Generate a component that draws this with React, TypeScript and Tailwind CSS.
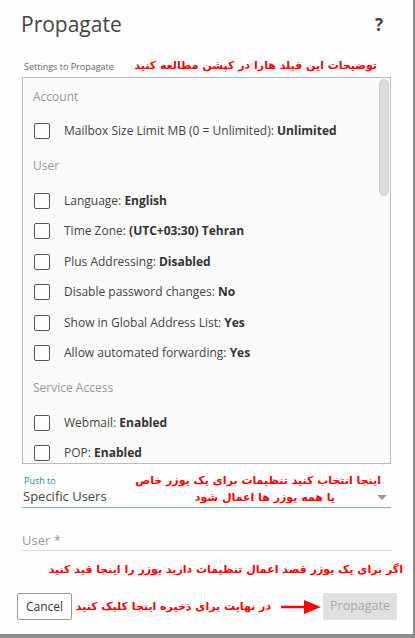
import React from "react";

type Row = { label: string; value: string };
type Section = { title: string; rows: Row[] };

const sections: Section[] = [
  {
    title: "Account",
    rows: [{ label: "Mailbox Size Limit MB (0 = Unlimited):", value: "Unlimited" }],
  },
  {
    title: "User",
    rows: [
      { label: "Language:", value: "English" },
      { label: "Time Zone:", value: "(UTC+03:30) Tehran" },
      { label: "Plus Addressing:", value: "Disabled" },
      { label: "Disable password changes:", value: "No" },
      { label: "Show in Global Address List:", value: "Yes" },
      { label: "Allow automated forwarding:", value: "Yes" },
    ],
  },
  {
    title: "Service Access",
    rows: [
      { label: "Webmail:", value: "Enabled" },
      { label: "POP:", value: "Enabled" },
    ],
  },
];

const fa = "[font-family:'DejaVu_Sans',sans-serif] font-bold text-[#ff0000] whitespace-nowrap";

const Note = ({ children, className }: { children: React.ReactNode; className?: string }) => (
  <div dir="rtl" className={`${fa} text-[11px] leading-[17px] ${className ?? ""}`}>
    {children}
  </div>
);

export default function App() {
  return (
    <div className="w-[415px] h-[638px] bg-[#8c8c8c] overflow-hidden [font-family:'Open_Sans',sans-serif]">
      <div className="w-[413px] h-[634px] bg-[#fefefe] flex flex-col">
        {/* Header */}
        <div className="flex items-center justify-between pl-[21px] pr-[30px] pt-[8px] h-[42px]">
          <h1 className="text-[21px] text-[#444] font-normal">Propagate</h1>
          <span className="text-[17px] font-bold text-[#444]">?</span>
        </div>

        {/* Settings list */}
        <div className="flex items-end justify-between pl-[24px] pr-[36px] mt-[11px] h-[21px]">
          <span className="text-[9px] text-[#666] pb-[1px] whitespace-nowrap">Settings to Propagate</span>
          <Note className="text-[11.5px]">توضیحات این فیلد هارا در کپشن مطالعه کنید</Note>
        </div>
        <div className="mx-[22px] mt-[3px] h-[387px] border border-[#bcbcbc] bg-[#fafafa] relative overflow-hidden">
          <div className="absolute right-[1px] top-[1px] w-[10px] h-[117px] rounded-full bg-[#dcdcdc] border border-[#d0d0d0]" />
          <div className="pl-[10px] pt-[6px]">
            {sections.map((s) => (
              <div key={s.title}>
                <div className="h-[25px] flex items-center text-[12px] text-[#999]">{s.title}</div>
                <div className="pt-[7px] pb-[7px]">
                  {s.rows.map((r) => (
                    <div key={r.label} className="h-[30.5px] flex items-center gap-[14px]">
                      <span className="ml-[1px] w-[16px] h-[16px] rounded-[2px] border border-[#555] bg-white" />
                      <span className="text-[12px] text-[#444]">
                        {r.label} <b className="font-bold text-[#333]">{r.value}</b>
                      </span>
                    </div>
                  ))}
                </div>
              </div>
            ))}
          </div>
        </div>

        {/* Push to */}
        <div className="mx-[22px] mt-[10px] relative border-b border-[#7fb3c2] pb-[2px]">
          <div className="text-[9px] text-[#2b7ea1] pl-[2px] leading-[13px]">Push to</div>
          <div className="text-[13px] text-[#444] pl-[1px] leading-[18px]">Specific Users</div>
          <div className="absolute right-[4px] top-[21px] w-0 h-0 border-l-[5px] border-r-[5px] border-t-[5px] border-l-transparent border-r-transparent border-t-[#999]" />
          <div className="absolute right-[10px] top-[-2px] flex flex-col items-end">
            <Note>اینجا انتخاب کنید تنظیمات برای یک یوزر خاص</Note>
            <Note className="mr-[46px]">یا همه یوزر ها اعمال شود</Note>
          </div>
        </div>

        {/* User */}
        <div className="mx-[22px] mt-[23px] border-b border-[#dcdcdc] pb-[1px]">
          <div className="text-[13px] text-[#999] leading-[18px]">User *</div>
        </div>
        <Note className="mt-[10px] pr-[10px]">اگر برای یک یوزر قصد اعمال تنظیمات دارید یوزر را اینجا قید کنید</Note>

        {/* Footer */}
        <div className="flex items-center mt-[15px] pl-[17px] pr-[16px]">
          <button className="h-[27px] px-[8px] border border-[#999] bg-white rounded-[2px] text-[12px] text-[#333]">
            Cancel
          </button>
          <Note className="ml-[9px] w-[190px] text-right">در نهایت برای ذخیره اینجا کلیک کنید</Note>
          <svg width="42" height="14" viewBox="0 0 42 14" className="ml-[9px]">
            <line x1="1" y1="7" x2="26" y2="7" stroke="#ff0000" strokeWidth="2.5" />
            <polygon points="24,0 41,7 24,14" fill="#ff0000" />
          </svg>
          <button className="ml-auto h-[27px] w-[74px] bg-[#e0e0e0] rounded-[2px] text-[12.5px] text-[#aaa]">
            Propagate
          </button>
        </div>
      </div>
    </div>
  );
}
